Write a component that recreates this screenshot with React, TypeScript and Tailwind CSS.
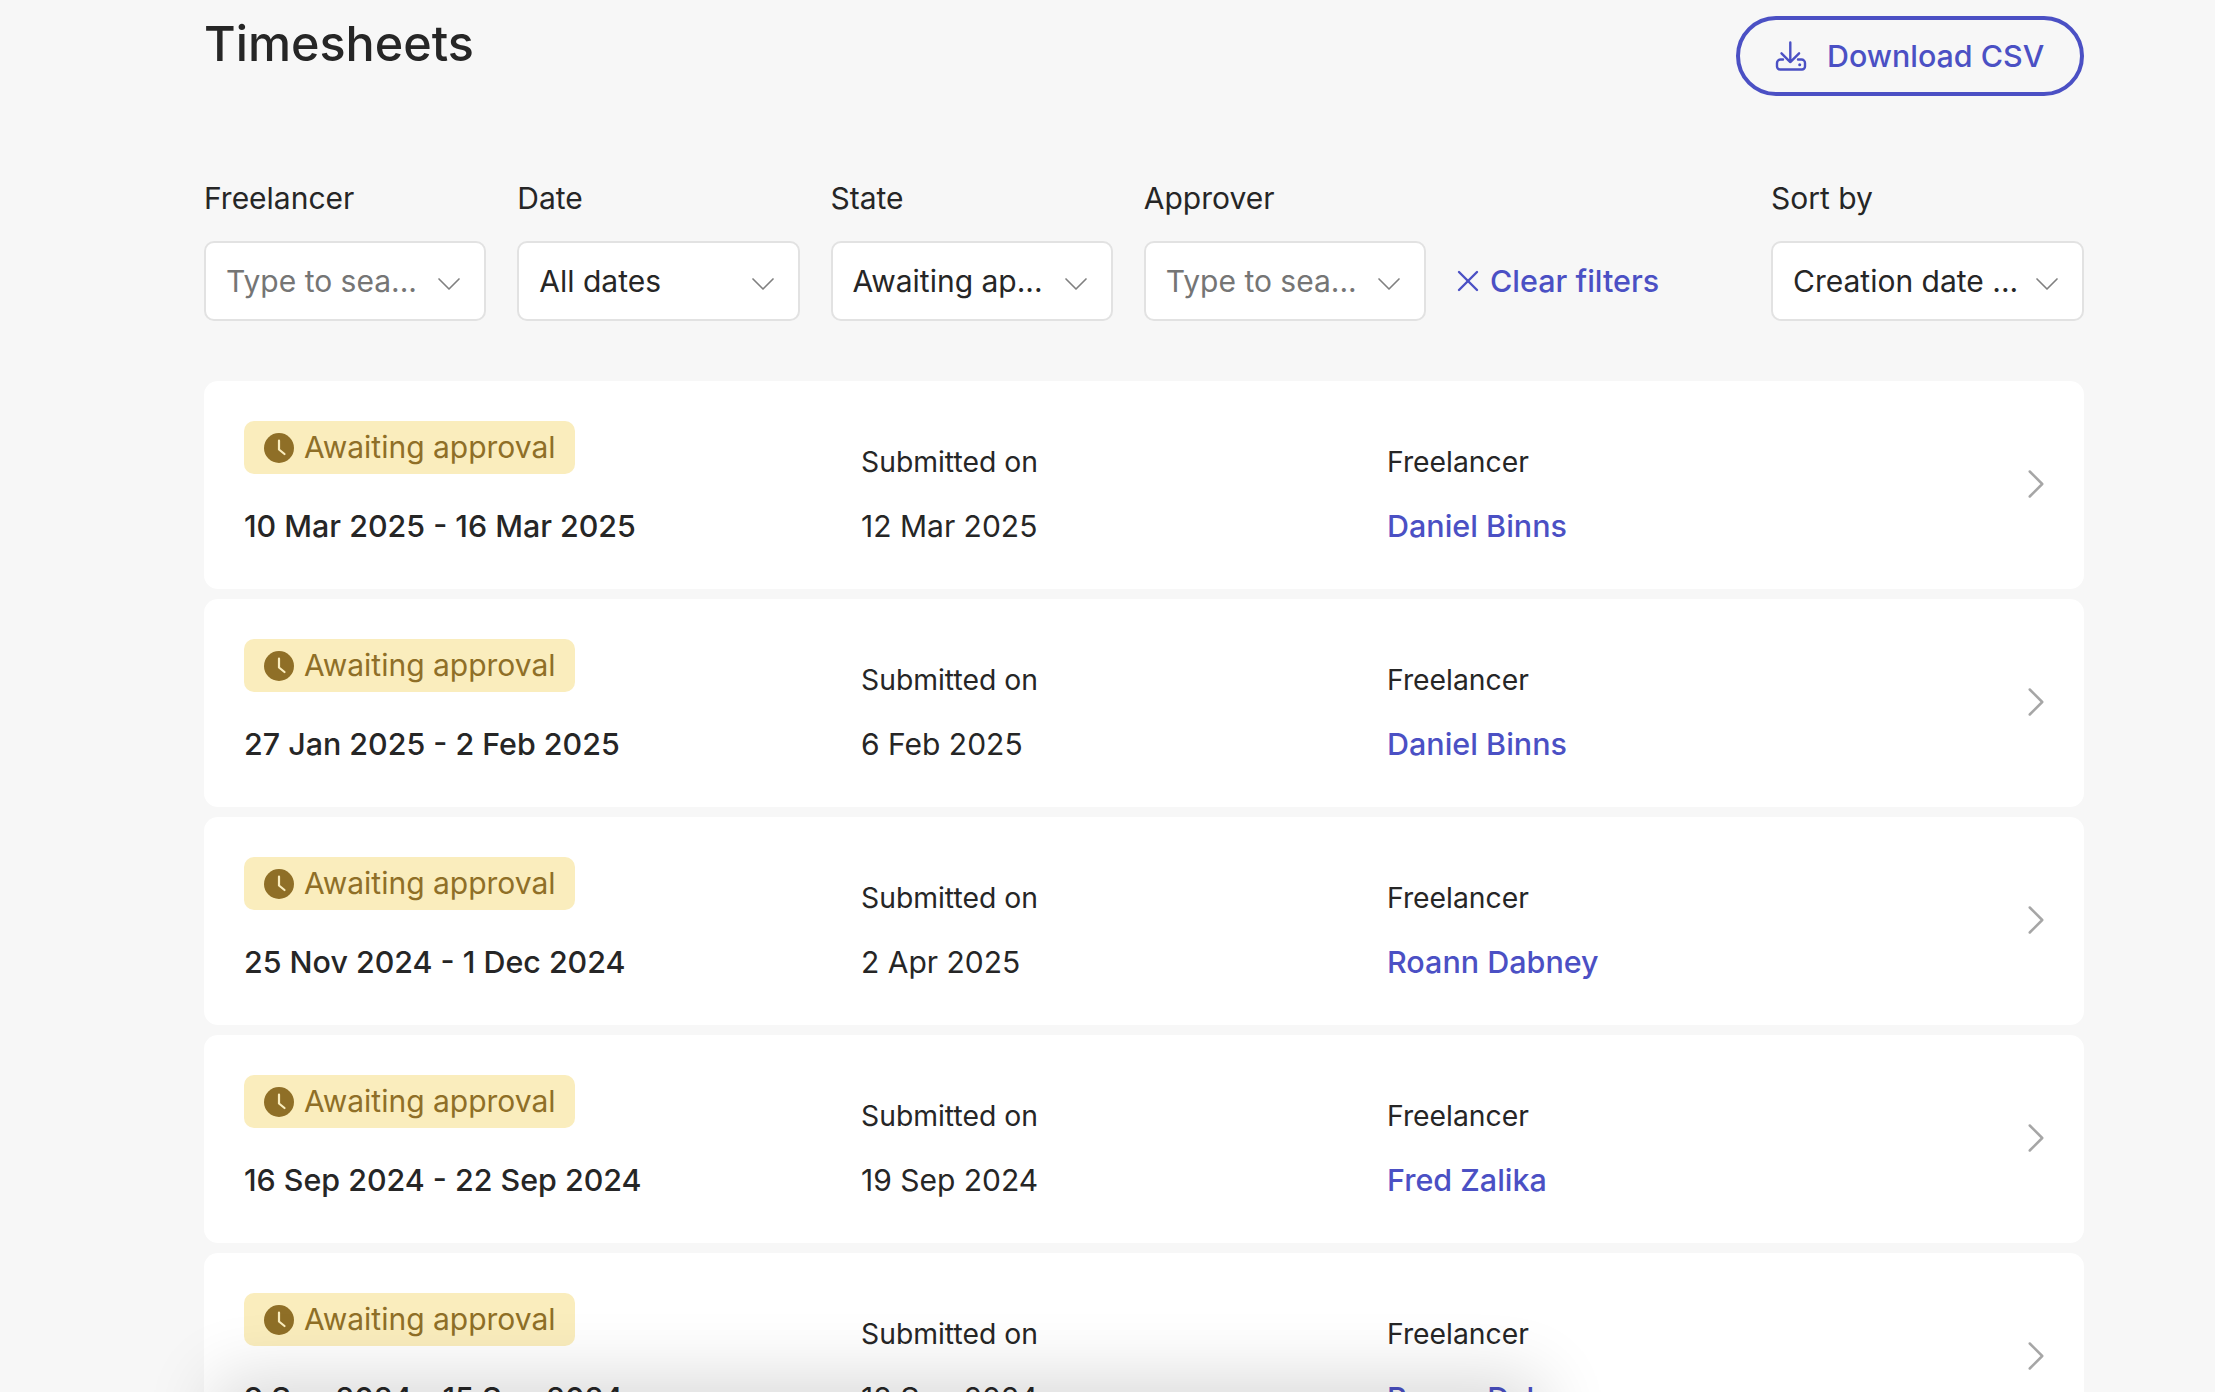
import { ChevronDown, ChevronRight, X } from "lucide-react";

const rows = [
  { range: "10 Mar 2025 - 16 Mar 2025", submitted: "12 Mar 2025", name: "Daniel Binns" },
  { range: "27 Jan 2025 - 2 Feb 2025", submitted: "6 Feb 2025", name: "Daniel Binns" },
  { range: "25 Nov 2024 - 1 Dec 2024", submitted: "2 Apr 2025", name: "Roann Dabney" },
  { range: "16 Sep 2024 - 22 Sep 2024", submitted: "19 Sep 2024", name: "Fred Zalika" },
  { range: "9 Sep 2024 - 15 Sep 2024", submitted: "18 Sep 2024", name: "Roann Dabney" },
];

function DownloadIcon() {
  return (
    <svg viewBox="0 0 32 30" className="w-[32px] h-[30px] shrink-0" fill="none" stroke="currentColor" strokeWidth="2.400" strokeLinecap="round" strokeLinejoin="round">
      <path d="M15.300 1.500V21M6.500 12.300l8.800 8.800 8.800-8.800" />
      <path d="M8 18.500H5.500A3.500 3.500 0 0 0 2 22v3.500a3 3 0 0 0 3 3h22a3 3 0 0 0 3-3V22a3.500 3.500 0 0 0-3.500-3.500H23" />
      <path d="M24.700 23.700h.01" strokeWidth="3" />
    </svg>
  );
}

function ClockIcon() {
  return (
    <svg viewBox="0 0 30 30" className="w-[30px] h-[30px] shrink-0">
      <circle cx="15" cy="15" r="15" fill="#8f6f27" />
      <path d="M15 7.500v9l5.500 4.500" fill="none" stroke="#faedbd" strokeWidth="2.200" strokeLinecap="round" strokeLinejoin="round" />
    </svg>
  );
}

function Filter({ label, value, muted, width }: { label: string; value: string; muted?: boolean; width: string }) {
  return (
    <div className={width}>
      <div className="text-[30px] leading-[44px] text-[#262626]">{label}</div>
      <div className="mt-[21px] h-[80px] rounded-[10px] border-2 border-[#e2e2e2] bg-white flex items-center justify-between pl-[20px] pr-[15px]">
        <span className={`text-[30px] whitespace-nowrap ${muted ? "text-[#757575]" : "text-[#262626]"}`}>{value}</span>
        <ChevronDown className="w-[40px] h-[40px] mt-[6px] text-[#808080] shrink-0" strokeWidth={1} />
      </div>
    </div>
  );
}

function Row({ range, submitted, name }: { range: string; submitted: string; name: string }) {
  return (
    <div className="h-[208px] rounded-[14px] bg-white px-[40px] pt-[40px] flex relative">
      <div className="w-[617px]">
        <div className="w-[331px] h-[53px] rounded-[10px] bg-[#faedbd] text-[#8f6f27] flex items-center pl-[20px] gap-[10px]">
          <ClockIcon />
          <span className="text-[30px] mb-[1px] whitespace-nowrap">Awaiting approval</span>
        </div>
        <div className="mt-[30px] text-[30.400px] leading-[44px] font-medium text-[#262626] whitespace-nowrap">{range}</div>
      </div>
      <div className="w-[526px] pt-[19px]">
        <div className="text-[28.300px] leading-[44px] text-[#262626]">Submitted on</div>
        <div className="mt-[20px] text-[30px] leading-[44px] text-[#262626]">{submitted}</div>
      </div>
      <div className="flex-1 pt-[19px]">
        <div className="text-[28.300px] leading-[44px] text-[#262626]">Freelancer</div>
        <div className="mt-[20px] text-[30.500px] leading-[44px] font-medium text-[#4b50c4]">{name}</div>
      </div>
      <ChevronRight className="absolute right-[23px] top-[78px] w-[50px] h-[50px] text-[#a6a6a6]" strokeWidth={1.200} />
    </div>
  );
}

export default function App() {
  return (
    <div className="h-[1392px] overflow-hidden bg-[#f7f7f7] pl-[204px] pr-[131px] relative font-['Inter',sans-serif]">
      <div className="flex justify-between items-start pt-[16px]">
        <h1 className="text-[48.500px] leading-[55px] font-medium text-[#262626]">Timesheets</h1>
        <button className="w-[348px] h-[80px] rounded-full border-4 border-[#4b50c4] text-[#4b50c4] flex items-center pl-[35px] gap-[20px] text-[30.400px] font-medium whitespace-nowrap">
          <DownloadIcon />
          <span className="mt-[1px]">Download CSV</span>
        </button>
      </div>

      <div className="mt-[80px] flex items-end">
        <div className="flex gap-[31px]">
          <Filter label="Freelancer" value="Type to sea..." muted width="w-[282.250px]" />
          <Filter label="Date" value="All dates" width="w-[282.250px]" />
          <Filter label="State" value="Awaiting ap..." width="w-[282.250px]" />
          <Filter label="Approver" value="Type to sea..." muted width="w-[282.250px]" />
        </div>
        <div className="ml-[24px] h-[80px] flex items-center gap-[4px] text-[#4b50c4] text-[30.500px] font-medium whitespace-nowrap">
          <X className="w-[36px] h-[36px]" strokeWidth={1.600} />
          Clear filters
        </div>
        <div className="ml-auto">
          <Filter label="Sort by" value="Creation date ..." width="w-[313px]" />
        </div>
      </div>

      <div className="mt-[60px] flex flex-col gap-[10px]">
        {rows.map((r) => (
          <Row key={r.range} {...r} />
        ))}
      </div>

      {/* shadow of the floating bar that sits below the fold */}
      <div className="absolute left-[255px] top-[1420px] w-[1245px] h-[80px] shadow-[0_0_70px_40px_rgba(0,0,0,0.16)]" />
    </div>
  );
}
